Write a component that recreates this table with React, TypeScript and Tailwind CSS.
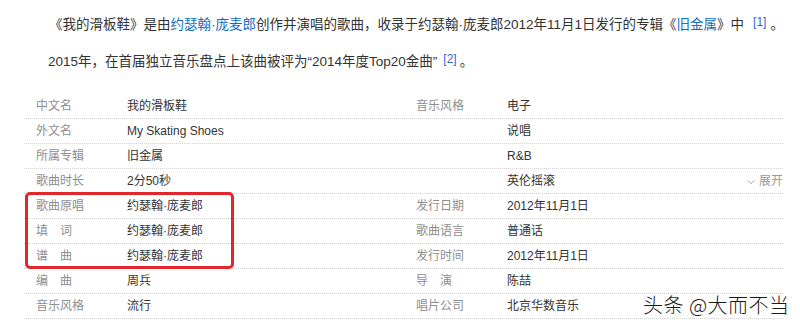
import React from "react";

type Cell = { label: string; value: string; extra?: boolean; spaced?: boolean };

const rows: [Cell, Cell][] = [
  [{ label: "中文名", value: "我的滑板鞋" }, { label: "音乐风格", value: "电子" }],
  [{ label: "外文名", value: "My Skating Shoes" }, { label: "", value: "说唱" }],
  [{ label: "所属专辑", value: "旧金属" }, { label: "", value: "R&B" }],
  [{ label: "歌曲时长", value: "2分50秒" }, { label: "", value: "英伦摇滚", extra: true }],
  [{ label: "歌曲原唱", value: "约瑟翰·庞麦郎" }, { label: "发行日期", value: "2012年11月1日" }],
  [{ label: "填词", value: "约瑟翰·庞麦郎", spaced: true }, { label: "歌曲语言", value: "普通话" }],
  [{ label: "谱曲", value: "约瑟翰·庞麦郎", spaced: true }, { label: "发行时间", value: "2012年11月1日" }],
  [{ label: "编曲", value: "周兵", spaced: true }, { label: "导演", value: "陈喆", spaced: true }],
  [{ label: "音乐风格", value: "流行" }, { label: "唱片公司", value: "北京华数音乐" }],
];

function Label({ cell }: { cell: Cell }) {
  if (cell.spaced) {
    return (
      <div className="w-[91px] shrink-0 text-[#8e8e8e] flex">
        <span className="w-[24px]">{cell.label[0]}</span>
        <span>{cell.label[1]}</span>
      </div>
    );
  }
  return <div className="w-[91px] shrink-0 text-[#8e8e8e]">{cell.label}</div>;
}

function Half({ cell, left }: { cell: Cell; left: boolean }) {
  return (
    <div className={`flex items-center pl-[12px] ${left ? "w-[380px]" : "flex-1"}`}>
      <Label cell={cell} />
      <div className="text-[#333]">{cell.value}</div>
      {cell.extra && (
        <div className="ml-auto flex items-center text-[#999]">
          <svg width="8" height="6" viewBox="0 0 8 6" className="mr-[4px] mt-[1px]">
            <path d="M0.5 1.5 L4 4.5 L7.5 1.5" fill="none" stroke="#aaa" strokeWidth="1" />
          </svg>
          <span>展开</span>
        </div>
      )}
    </div>
  );
}

export default function App() {
  return (
    <div className="relative w-[800px] h-[326px] overflow-hidden bg-white font-['Liberation_Sans','Noto_Sans_CJK_SC',sans-serif]">
      <div className="pl-[49px] pt-[15px] text-[13.5px] leading-[20px] text-[#333] whitespace-nowrap">
        <p>
          《我的滑板鞋》是由<span className="text-[#136ec2]">约瑟翰·庞麦郎</span>创作并演唱的歌曲，收录于约瑟翰·庞麦郎2012年11月1日发行的专辑《<span className="text-[#136ec2]">旧金属</span>》中
          <sup className="ml-[9px] text-[12px] text-[#3366cc] relative top-[-3px]">[1]</sup>
          <span className="ml-[4px]">。</span>
        </p>
        <p className="mt-[17px] -ml-[1px]">
          2015年，在首届独立音乐盘点上该曲被评为“2014年度Top20金曲”
          <sup className="ml-[6px] text-[12px] text-[#3366cc] relative top-[-3px]">[2]</sup>
          <span className="ml-[3px]">。</span>
        </p>
      </div>

      <div className="ml-[24px] mt-[22px] w-[759px] text-[12px]">
        {rows.map((r, i) => (
          <div key={i} className="flex h-[25px] leading-[24px] border-b border-dotted border-[#d4d4d4]">
            <Half cell={r[0]} left />
            <Half cell={r[1]} left={false} />
          </div>
        ))}
      </div>

      <div className="absolute left-[25px] top-[192px] w-[209px] h-[77px] border-[3px] border-[#e3262b] rounded-[5px]" />

      <div className="absolute left-[643px] top-[292px] text-[20px] leading-[26px] text-[#1a1a1a] font-['Noto_Sans_CJK_SC',sans-serif] font-light tracking-[0.5px] [text-shadow:0_0_2px_#fff]">
        头条 @大而不当
      </div>
    </div>
  );
}
